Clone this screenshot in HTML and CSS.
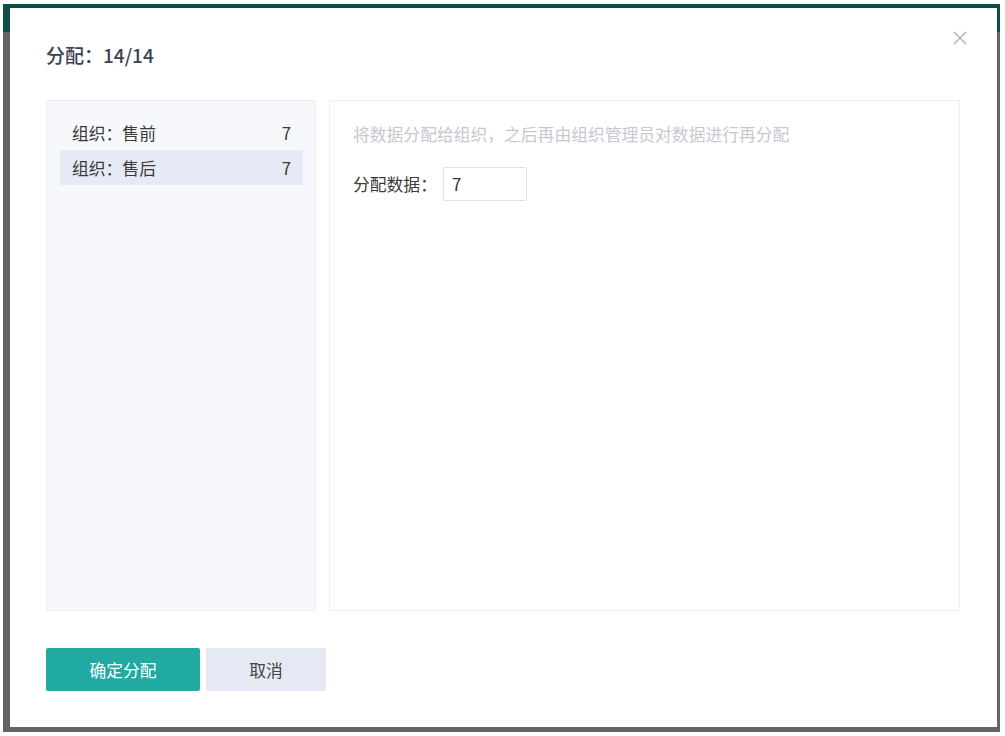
FILE: index.html
```html
<!DOCTYPE html>
<html lang="zh">
<head>
<meta charset="utf-8">
<title>分配</title>
<link rel="stylesheet" href="styles.css">
</head>
<body>
<div class="screen">
  <div class="topbar"></div>
  <div class="modal">
    <div class="modal-head">
      <h1 class="title">分配：14/14</h1>
      <button class="close" aria-label="关闭">
        <svg width="14" height="14" viewBox="0 0 14 14"><path d="M1 1L13 13M13 1L1 13" stroke="#b3b7be" stroke-width="1.6" fill="none"/></svg>
      </button>
    </div>
    <div class="modal-body">
      <div class="org-list">
        <div class="org-item"><span>组织：售前</span><span>7</span></div>
        <div class="org-item active"><span>组织：售后</span><span>7</span></div>
      </div>
      <div class="detail">
        <p class="hint">将数据分配给组织，之后再由组织管理员对数据进行再分配</p>
        <div class="field">
          <label class="field-label">分配数据：</label>
          <div class="input">7</div>
        </div>
      </div>
    </div>
    <div class="modal-foot">
      <button class="btn btn-primary">确定分配</button>
      <button class="btn btn-cancel">取消</button>
    </div>
  </div>
</div>
</body>
</html>
```
FILE: styles.css
```css
html, body {
  margin: 0;
  padding: 0;
  background: #ffffff;
}
body {
  font-family: "Noto Sans CJK SC", "Noto Sans", sans-serif;
  color: #333;
}
.screen {
  position: relative;
  margin: 4px 5px 0 3px;
  height: 728px;
  background: #646464;
  overflow: hidden;
}
.topbar {
  height: 28px;
  background: #0e4e49;
}
.modal {
  position: absolute;
  left: 7px;
  top: 4px;
  width: 987px;
  height: 719px;
  background: #ffffff;
  box-sizing: border-box;
  padding: 0 37px 0 36px;
  display: flex;
  flex-direction: column;
}
.modal-head {
  display: flex;
  justify-content: space-between;
  align-items: flex-start;
  height: 92px;
}
.title {
  margin: 0;
  padding-top: 33px;
  font-size: 19px;
  line-height: 28px;
  font-weight: 500;
  color: #3c4253;
}
.close {
  margin: 23px -7px 0 0;
  padding: 0;
  border: 0;
  background: none;
  width: 14px;
  height: 14px;
  display: flex;
}
.modal-body {
  display: flex;
  gap: 13px;
  height: 511px;
}
.org-list {
  width: 270px;
  box-sizing: border-box;
  background: #f7f8fb;
  border: 1px solid #eceef3;
  padding: 14px 12px 0 13px;
}
.org-item {
  display: flex;
  justify-content: space-between;
  height: 35px;
  align-items: center;
  padding: 0 12px 0 12px;
  font-size: 16.8px;
  color: #3a3a3a;
}
.org-item.active {
  background: #e5eaf4;
}
.detail {
  flex: 1;
  box-sizing: border-box;
  border: 1px solid #eef0f3;
  padding: 21px 23px 0 23px;
}
.hint {
  margin: 0;
  font-size: 16.8px;
  line-height: 24px;
  color: #c6c9cf;
}
.field {
  display: flex;
  align-items: center;
  margin-top: 21px;
}
.field-label {
  font-size: 16.8px;
  color: #3a3a3a;
  width: 90px;
}
.input {
  width: 84px;
  height: 34px;
  box-sizing: border-box;
  border: 1px solid #dfe2e8;
  border-radius: 2px;
  padding-left: 8px;
  font-size: 16.8px;
  line-height: 32px;
  color: #333;
}
.modal-foot {
  display: flex;
  gap: 6px;
  margin-top: 37px;
}
.btn {
  height: 43px;
  border: 0;
  border-radius: 2px;
  font-family: inherit;
  font-size: 16.8px;
  padding: 0;
}
.btn-primary {
  width: 154px;
  background: #21aaa2;
  color: #ffffff;
}
.btn-cancel {
  width: 120px;
  background: #e4e9f3;
  color: #444;
}
```
